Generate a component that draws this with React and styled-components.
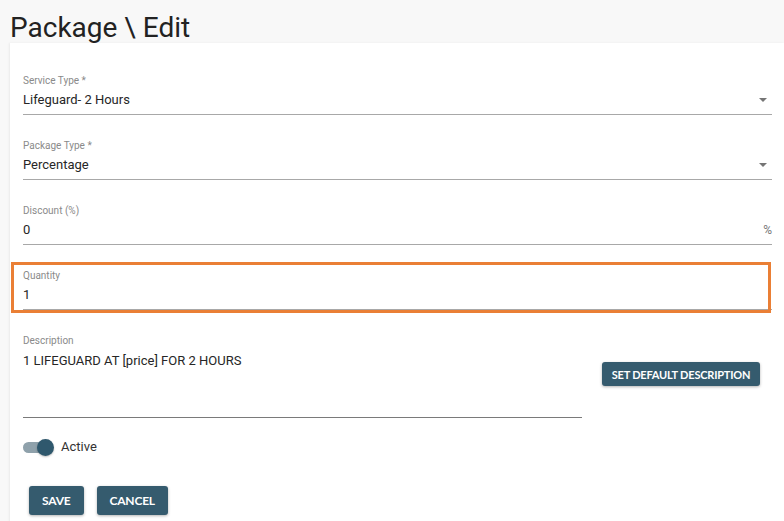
import React from 'react';
import styled, { createGlobalStyle } from 'styled-components';

const GlobalStyle = createGlobalStyle`
  html, body {
    margin: 0;
    padding: 0;
    background: #f8f8f8;
    font-family: Roboto, "Liberation Sans", Arial, sans-serif;
  }
  * { box-sizing: border-box; }
`;

const Page = styled.div`
  width: 784px;
  height: 521px;
  overflow: hidden;
  background: #f8f8f8;
`;

const Title = styled.h1`
  margin: 0;
  padding: 0 0 0 10px;
  height: 43px;
  line-height: 55px;
  font-size: 28px;
  font-weight: 400;
  color: #222;
  white-space: nowrap;
`;

const Card = styled.div`
  margin-left: 10px;
  background: #fff;
  min-height: 500px;
  padding: 31px 12px 0 13px;
  box-shadow: -1px 0 2px rgba(0, 0, 0, 0.06);
`;

const Field = styled.div`
  position: relative;
  width: ${p => p.width || '100%'};
  margin-bottom: ${p => p.last ? '0' : '24px'};

  ${p => p.highlight && `
    &::after {
      content: '';
      position: absolute;
      left: -12px;
      right: 1px;
      top: -7px;
      bottom: -3px;
      border: 3px solid #ea7f35;
      pointer-events: none;
    }
  `}
`;

const Label = styled.div`
  font-size: 10px;
  line-height: 14px;
  color: #8a8a8a;
  margin-bottom: 2px;
`;

const InputLine = styled.div`
  display: flex;
  height: ${p => p.tall ? '68px' : '25px'};
  align-items: flex-start;
  padding-top: ${p => p.tall ? '1px' : '0'};
  padding-bottom: 4px;
  border-bottom: 1px solid ${p => p.dark ? '#7a7a7a' : '#a8a8a8'};
  font-size: 13px;
  line-height: 20px;
  color: #262626;
`;

const Value = styled.span`
  flex: 1;
`;

const Caret = styled.span`
  align-self: center;
  width: 0;
  height: 0;
  margin-right: 5px;
  border-left: 4px solid transparent;
  border-right: 4px solid transparent;
  border-top: 4px solid #757575;
`;

const Suffix = styled.span`
  font-size: 12px;
  color: #777;
`;

const DescRow = styled.div`
  display: flex;
  align-items: center;
`;

const Button = styled.button`
  border: none;
  border-radius: 3px;
  background: #355b6e;
  color: #fff;
  font-family: Lato, "Liberation Sans", Arial, sans-serif;
  font-weight: 700;
  font-size: ${p => p.small ? '11px' : '12px'};
  text-transform: uppercase;
  height: ${p => p.small ? '24px' : '29px'};
  padding: 0 ${p => p.small ? '8px' : '13px'};
  box-shadow: 0 1px 3px rgba(0, 0, 0, 0.3);
  letter-spacing: -0.2px;
  cursor: pointer;
`;

const DescButton = styled(Button)`
  margin-left: 20px;
  margin-bottom: 4px;
  width: 158px;
  padding: 0;
`;

const ToggleRow = styled.div`
  display: flex;
  align-items: center;
  gap: 8px;
  margin-top: 21px;
  height: 16px;
  font-size: 13px;
  line-height: 16px;
  color: #333;
`;

const Track = styled.span`
  position: relative;
  display: inline-block;
  width: 28px;
  height: 11px;
  border-radius: 6px;
  background: #8fa1ab;
  margin-right: 2px;
`;

const Thumb = styled.span`
  position: absolute;
  right: -3px;
  top: -3px;
  width: 17px;
  height: 17px;
  border-radius: 50%;
  background: #2f586d;
  box-shadow: 0 1px 2px rgba(0, 0, 0, 0.25);
`;

const Actions = styled.div`
  display: flex;
  gap: 13px;
  margin-top: 31px;
  padding-left: 6px;
`;

const App = () => (
  <Page>
    <GlobalStyle />
    <Title>Package \ Edit</Title>
    <Card>
      <Field>
        <Label>Service Type *</Label>
        <InputLine>
          <Value>Lifeguard- 2 Hours</Value>
          <Caret />
        </InputLine>
      </Field>
      <Field>
        <Label>Package Type *</Label>
        <InputLine>
          <Value>Percentage</Value>
          <Caret />
        </InputLine>
      </Field>
      <Field>
        <Label>Discount (%)</Label>
        <InputLine>
          <Value>0</Value>
          <Suffix>%</Suffix>
        </InputLine>
      </Field>
      <Field highlight>
        <Label>Quantity</Label>
        <InputLine>
          <Value>1</Value>
        </InputLine>
      </Field>
      <DescRow>
        <Field width="559px" last>
          <Label>Description</Label>
          <InputLine tall dark>
            <Value>1 LIFEGUARD AT [price] FOR 2 HOURS</Value>
          </InputLine>
        </Field>
        <DescButton small>Set default description</DescButton>
      </DescRow>
      <ToggleRow>
        <Track><Thumb /></Track>
        Active
      </ToggleRow>
      <Actions>
        <Button>Save</Button>
        <Button>Cancel</Button>
      </Actions>
    </Card>
  </Page>
);

export default App;
